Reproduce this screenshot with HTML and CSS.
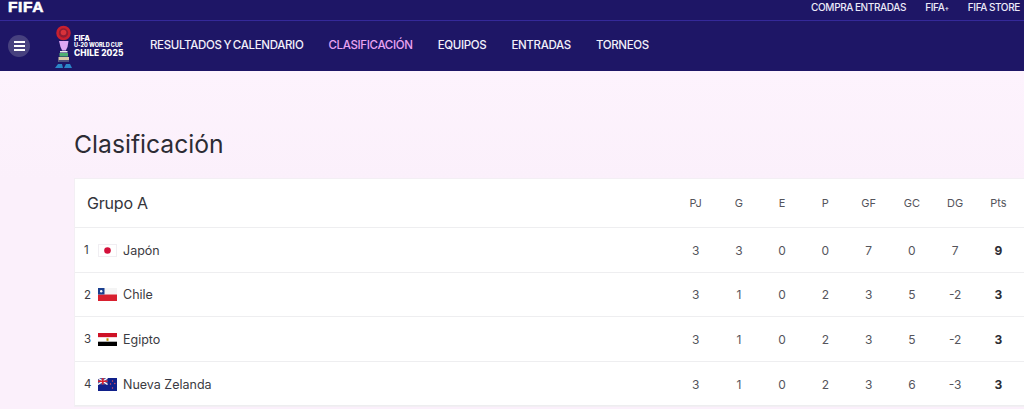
FILE: index.html
```html
<!DOCTYPE html>
<html lang="es">
<head>
<meta charset="utf-8">
<title>Clasificación</title>
<link rel="stylesheet" href="styles.css">
</head>
<body>
<header class="header">
  <div class="topbar">
    <span class="fifa-logo">FIFA</span>
    <nav class="toplinks"><a>COMPRA ENTRADAS</a><a>FIFA<span class="plus">+</span></a><a>FIFA STORE</a></nav>
  </div>
  <div class="mainbar">
    <button class="menu" aria-label="Menu"><span></span><span></span><span></span></button>
    <div class="event-logo">
      <svg class="trophy" width="18" height="44" viewBox="0 0 18 44">
        <circle cx="8.500" cy="8" r="6" fill="#8f1c33" stroke="#c8202f" stroke-width="2.500"/>
        <circle cx="8.500" cy="7.500" r="2.800" fill="#d8323a"/>
        <path d="M4 16h9.500l-1 6-1.700 3.500h-3.600l-1.700-3.500z" fill="#dda6f4"/>
        <rect x="5" y="26" width="7.500" height="1.500" fill="#ececec"/>
        <rect x="4.500" y="28" width="8.500" height="3.500" fill="#4fae72"/>
        <rect x="3.500" y="32" width="10.500" height="5" fill="#d8c9a8"/>
        <rect x="3.500" y="35" width="10.500" height="2" fill="#4a4f7f"/>
        <path d="M0 43l3-4h4l1 4zM9 43l2-4h4l2 4z" fill="#2a86c8"/>
      </svg>
      <div class="event-text"><b>FIFA</b><small>U-20 WORLD CUP</small><strong>CHILE 2025</strong></div>
    </div>
    <nav class="mainlinks"><a>RESULTADOS Y CALENDARIO</a><a class="active">CLASIFICACIÓN</a><a>EQUIPOS</a><a>ENTRADAS</a><a>TORNEOS</a></nav>
  </div>
</header>
<main class="content">
  <h1 class="title">Clasificación</h1>
  <section class="card">
    <div class="row head">
      <div class="group">Grupo A</div>
      <div class="stats"><span>PJ</span><span>G</span><span>E</span><span>P</span><span>GF</span><span>GC</span><span>DG</span><span>Pts</span></div>
    </div>
    <div class="row team">
      <div class="name"><span class="pos">1</span>
        <svg class="flag" viewBox="0 0 19 13"><rect x=".5" y=".5" width="18" height="12" fill="#fff" stroke="#f0eef2"/><circle cx="9.500" cy="6.500" r="3.300" fill="#d4103a"/></svg>Japón</div>
      <div class="stats"><span>3</span><span>3</span><span>0</span><span>0</span><span>7</span><span>0</span><span>7</span><span class="pts">9</span></div>
    </div>
    <div class="row team">
      <div class="name"><span class="pos">2</span>
        <svg class="flag" viewBox="0 0 19 13"><rect width="19" height="6.500" fill="#f4f4f4"/><rect y="6.500" width="19" height="6.500" fill="#d8202f"/><rect width="6.500" height="6.500" fill="#1a3f8f"/><circle cx="3.200" cy="3.200" r="1.200" fill="#fff"/></svg>Chile</div>
      <div class="stats"><span>3</span><span>1</span><span>0</span><span>2</span><span>3</span><span>5</span><span>-2</span><span class="pts">3</span></div>
    </div>
    <div class="row team">
      <div class="name"><span class="pos">3</span>
        <svg class="flag" viewBox="0 0 19 13"><rect width="19" height="4.400" fill="#ce1126"/><rect y="4.400" width="19" height="4.300" fill="#fff"/><rect y="8.700" width="19" height="4.300" fill="#000"/><rect x="8.500" y="5.300" width="2" height="2.500" fill="#c09300"/></svg>Egipto</div>
      <div class="stats"><span>3</span><span>1</span><span>0</span><span>2</span><span>3</span><span>5</span><span>-2</span><span class="pts">3</span></div>
    </div>
    <div class="row team">
      <div class="name"><span class="pos">4</span>
        <svg class="flag" viewBox="0 0 19 13"><rect width="19" height="13" fill="#10208a"/><rect width="9.500" height="6.500" fill="#5a5a9a"/><path d="M0 0l9.500 6.500M9.500 0L0 6.500" stroke="#fff" stroke-width="1.300"/><path d="M4.750 0v6.500M0 3.250h9.500" stroke="#d8202f" stroke-width="1.500"/><g fill="#e8505f"><circle cx="14.500" cy="3" r=".7"/><circle cx="12.500" cy="6" r=".7"/><circle cx="16.800" cy="5.500" r=".7"/><circle cx="14.500" cy="10" r=".7"/></g></svg>Nueva Zelanda</div>
      <div class="stats"><span>3</span><span>1</span><span>0</span><span>2</span><span>3</span><span>6</span><span>-3</span><span class="pts">3</span></div>
    </div>
  </section>
</main>
</body>
</html>
```
FILE: styles.css
```css
* { box-sizing: border-box; }
html, body { margin: 0; height: 100%; overflow: hidden; }
body { background: linear-gradient(180deg, #fdf3fd 71px, #fbf0fb 180px); font-family: Inter, "Liberation Sans", sans-serif; color: #2f2f36; }

.header { background: #1e1666; color: #fff; }
.topbar { height: 21px; border-bottom: 1px solid #35299a; display: flex; align-items: center; justify-content: space-between; padding: 0 4px 7px 8px; }
.fifa-logo { font-family: "Liberation Sans", sans-serif; font-weight: 700; font-size: 15.500px; letter-spacing: .6px; line-height: 1; margin-top: 1px; -webkit-text-stroke: .6px #fff; }
.toplinks { display: flex; gap: 19px; font-size: 10px; font-weight: 500; letter-spacing: -.35px; word-spacing: -.5px; color: #eceaf8; }
.plus { font-size: 7px; }
.mainbar { height: 50px; display: flex; align-items: center; padding-left: 8px; }
.menu { width: 22px; height: 22px; border: 0; border-radius: 50%; background: #47417f; padding: 0; display: flex; flex-direction: column; justify-content: center; align-items: center; gap: 2px; }
.menu span { width: 11px; height: 2px; background: #fff; }
.event-logo { display: flex; align-items: center; margin-left: 25px; width: 95px; }
.trophy { margin-top: 1px; flex: none; }
.event-text { display: flex; flex-direction: column; margin-left: 1px; color: #fff; line-height: 1; }
.event-text b { font-size: 7.500px; font-weight: 800; line-height: 7px; }
.event-text small { font-size: 5.500px; font-weight: 800; line-height: 7px; white-space: nowrap; }
.event-text strong { font-size: 8.400px; font-weight: 800; line-height: 8px; white-space: nowrap; letter-spacing: .1px; }
.mainlinks { display: flex; gap: 25px; font-size: 11.500px; font-weight: 500; letter-spacing: -.33px; word-spacing: -1px; color: #f2f0fa; padding-bottom: 2px; }
.mainlinks .active { color: #e9a3f2; }

.content { padding: 59px 0 0 74px; }
.title { margin: 0; font-size: 24.700px; font-weight: 400; line-height: 28px; color: #2c2c34; }
.card { margin-top: 20px; background: #fff; border: 1px solid #f3eff4; width: 950px; border-right: 0; }
.row { display: flex; align-items: center; justify-content: space-between; border-bottom: 1px solid #eeeef0; }
.head { height: 49px; padding-left: 12px; }
.team { height: 44.600px; padding: 1px 0 0 9px; }
.group { font-size: 16px; letter-spacing: -.2px; color: #34343b; }
.stats { display: flex; width: 346px; margin-right: 4px; }
.stats span { width: 43.250px; text-align: center; font-size: 12px; color: #55555c; }
.head .stats span { font-size: 11px; }
.stats .pts { font-weight: 700; color: #2c2c34; }
.name { display: flex; align-items: center; font-size: 12.500px; color: #3b3b42; }
.pos { width: 14px; font-size: 11.500px; }
.flag { width: 19px; height: 13px; margin-right: 6px; }
```
